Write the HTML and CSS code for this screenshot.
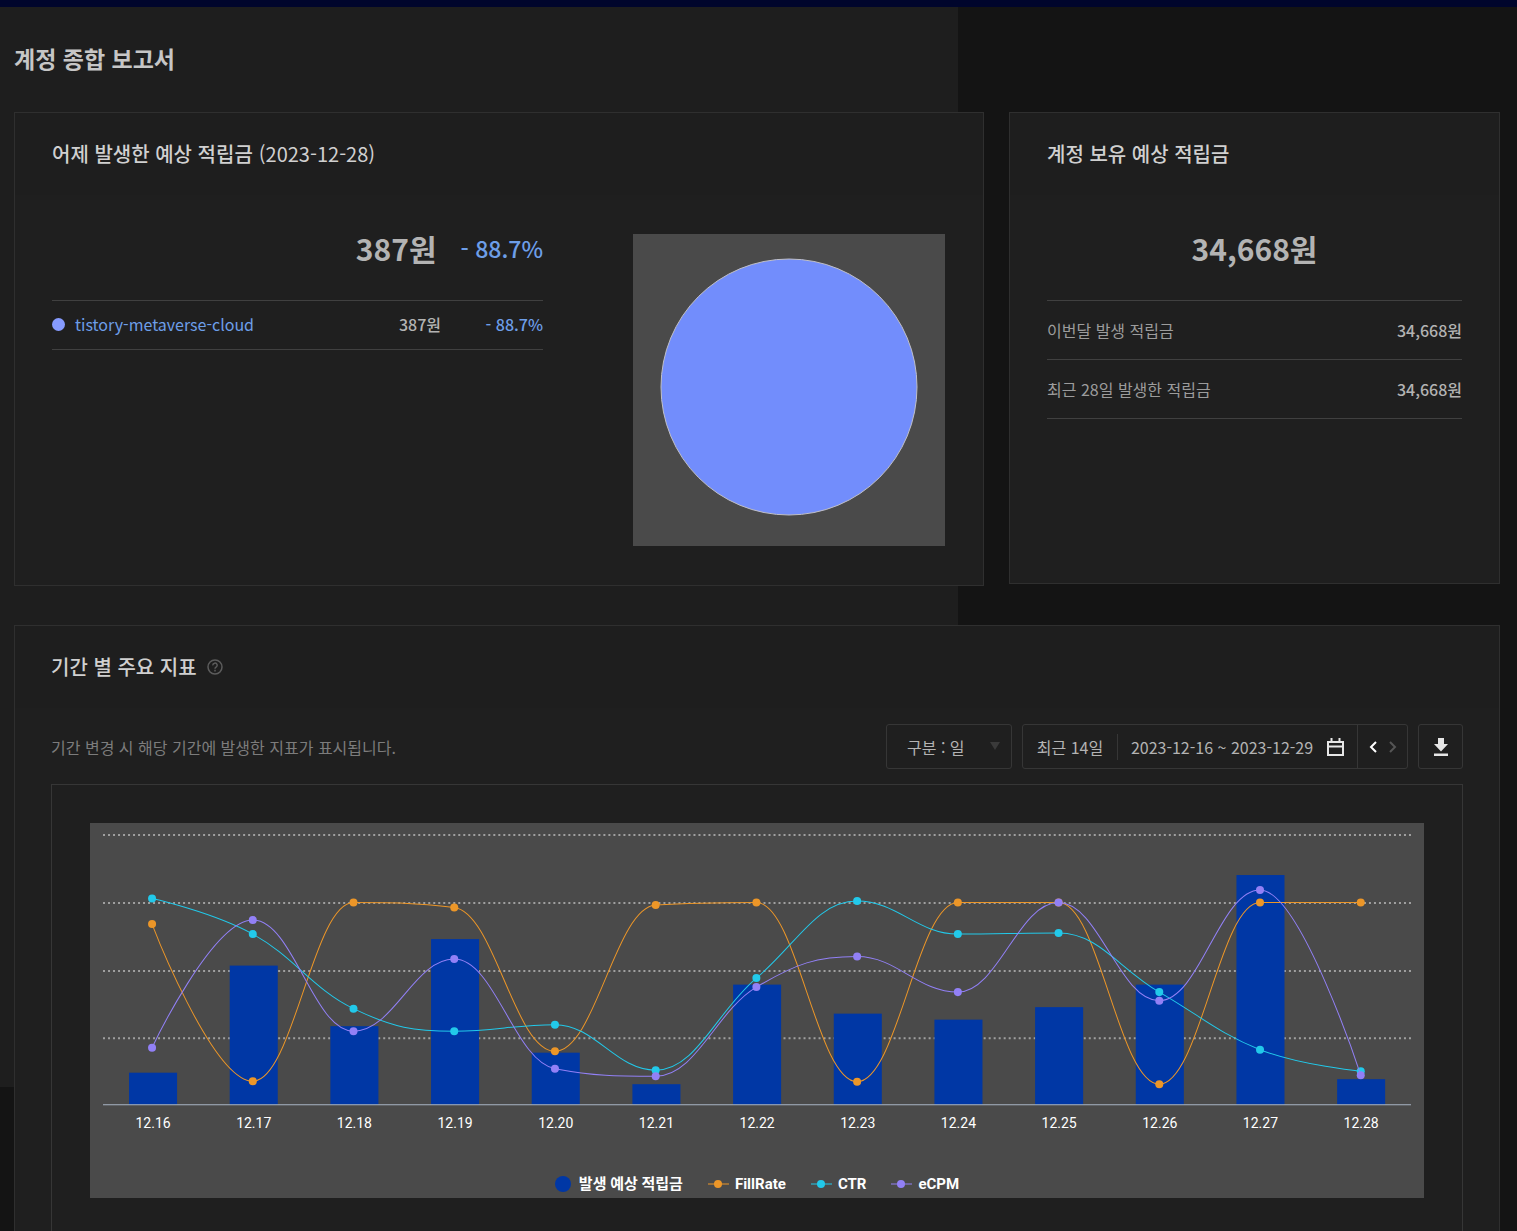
FILE: index.html
```
<!DOCTYPE html>
<html lang="ko">
<head>
    <meta charset="utf-8">
    <title>계정 종합 보고서</title>
    <link rel="stylesheet" href="styles.css">
</head>
<body>
    <div class="topbar"></div>
    <main class="page">
        <h1 class="page-title">계정 종합 보고서</h1>

        <div class="cards">
            <section class="card card-yesterday">
                <h2 class="card-head">어제 발생한 예상 적립금 <span class="date">(2023-12-28)</span></h2>
                <div class="card-body split">
                    <div class="income">
                        <div class="total">
                            <strong>387원</strong>
                            <span class="down">- 88.7%</span>
                        </div>
                        <ul class="media-list">
                            <li>
                                <i class="dot"></i>
                                <a href="#">tistory-metaverse-cloud</a>
                                <span class="amount">387원</span>
                                <span class="down rate">- 88.7%</span>
                            </li>
                        </ul>
                    </div>
                    <svg class="pie" viewBox="0 0 312 312">
                        <circle cx="156" cy="153" r="128" />
                    </svg>
                </div>
            </section>

            <section class="card">
                <h2 class="card-head">계정 보유 예상 적립금</h2>
                <div class="card-body">
                    <div class="total center"><strong>34,668원</strong></div>
                    <dl class="sum-list">
                        <div><dt>이번달 발생 적립금</dt><dd>34,668원</dd></div>
                        <div><dt>최근 28일 발생한 적립금</dt><dd>34,668원</dd></div>
                    </dl>
                </div>
            </section>
        </div>

        <section class="card card-chart">
            <h2 class="card-head">기간 별 주요 지표
                <button class="help" type="button" aria-label="도움말">
                    <svg width="16" height="16" viewBox="0 0 16 16">
                        <circle cx="8" cy="8" r="7" />
                        <path d="M5.8 6.4a2.2 2.2 0 1 1 3.3 1.8C8.3 8.700 8 9 8 9.800M8 10.800v1.600" />
                    </svg>
                </button>
            </h2>
            <div class="card-body">
                <div class="toolbar">
                    <p>기간 변경 시 해당 기간에 발생한 지표가 표시됩니다.</p>
                    <div class="select">
                        <select aria-label="구분">
                            <option>구분 : 일</option>
                        </select>
                        <svg width="10" height="8" viewBox="0 0 10 8"><path d="M0 0h10L5 8z" /></svg>
                    </div>
                    <div class="range">
                        <button class="preset" type="button">최근 14일</button>
                        <button class="dates" type="button">2023-12-16 ~ 2023-12-29
                            <svg width="17" height="18" viewBox="0 0 17 18"><path d="M1 4h15v13H1zM1 8.500h15M4.500 0v4M12.500 0v4" /></svg>
                        </button>
                        <div class="arrows">
                            <button type="button" aria-label="이전"><svg width="8" height="12" viewBox="0 0 8 12"><path d="M7 1L2 6l5 5" /></svg></button>
                            <button type="button" aria-label="다음" disabled><svg width="8" height="12" viewBox="0 0 8 12"><path d="M1 1l5 5-5 5" /></svg></button>
                        </div>
                    </div>
                    <button class="download" type="button" aria-label="다운로드">
                        <svg width="14" height="18" viewBox="0 0 14 18"><path d="M4 0h6v6h4l-7 7.500L0 6h4zM0 15.500h14v2.500H0z" /></svg>
                    </button>
                </div>

                <div class="chart-box">
                    <div class="chart">
                        <svg id="chart" viewBox="0 0 1333 340"></svg>
                        <ul class="legend">
                            <li class="income-bar"><svg width="16" height="16"><circle class="bar" cx="8" cy="8" r="8" /></svg>발생 예상 적립금</li>
                            <li><svg class="fill-rate" width="21" height="8"><path class="line" d="M0 4h21" /><circle class="point" cx="10" cy="4" r="4" /></svg>FillRate</li>
                            <li><svg class="ctr" width="21" height="8"><path class="line" d="M0 4h21" /><circle class="point" cx="10" cy="4" r="4" /></svg>CTR</li>
                            <li><svg class="ecpm" width="21" height="8"><path class="line" d="M0 4h21" /><circle class="point" cx="10" cy="4" r="4" /></svg>eCPM</li>
                        </ul>
                    </div>
                </div>
            </div>
        </section>
    </main>

    <script src="chart.js"></script>
</body>
</html>
```

FILE: styles.css
```
* { box-sizing: border-box; margin: 0; padding: 0; }
body {
    height: 100vh;
    overflow: hidden;
    background: #141414;
    color: #b3b3b3;
    font: 16px/24px "Noto Sans CJK KR", sans-serif;
}
button, select { font: inherit; color: inherit; background: none; border: 0; border-radius: 0; }
ul { list-style: none; }
svg { display: block; }
a { color: #6d9ee8; text-decoration: none; }
a:hover { text-decoration: underline; }

.topbar { height: 7px; background: #00052c; }
.page {
    padding: 34px 17px 0 14px;
    background: linear-gradient(#1e1e1e, #1e1e1e) no-repeat 0 0 / 958px 1080px;
}
.page-title { font-size: 23px; line-height: 34px; font-weight: 700; color: #c6c6c6; margin-bottom: 37px; }

.cards { display: grid; grid-template-columns: 970fr 491fr; gap: 25px; align-items: start; margin-bottom: 39px; }
.card { background: #1f1f1f; border: 1px solid #2f2f2f; min-height: 472px; }
.card-yesterday { min-height: 474px; }
.card-head {
    display: flex;
    align-items: center;
    gap: 6px;
    height: 82px;
    padding: 0 37px;
    background: #1e1e1e;
    color: #d0d0d0;
    font-size: 20px;
    line-height: 30px;
    font-weight: 500;
}
.card-head .date { font-weight: 400; }
.card-body { padding: 0 37px; }
.card-chart .card-head, .card-chart .card-body { padding: 0 36px; }
.split { display: flex; justify-content: space-between; gap: 90px; }
.income { flex: 1; }

.total { display: flex; align-items: center; justify-content: flex-end; gap: 24px; height: 105px; }
.total strong { font-size: 30px; line-height: 44px; font-weight: 700; }
.total .down { font-size: 23px; line-height: 36px; }
.total.center { justify-content: center; }
.down { color: #6d9ee8; font-weight: 500; }

.media-list { border-top: 1px solid #404040; }
.media-list li { display: flex; align-items: center; height: 49px; padding-bottom: 2px; border-bottom: 1px solid #404040; }
.dot { width: 13px; height: 13px; margin-right: 10px; border-radius: 50%; background: #869bff; }
.amount { margin-left: auto; font-weight: 500; }
.rate { width: 102px; text-align: right; }

.pie { flex: none; width: 312px; height: 312px; margin-top: 39px; margin-right: 1px; background: #4a4a4a; }
.pie circle { fill: #728dfc; stroke: #c0c0c8; }

.sum-list { border-top: 1px solid #404040; }
.sum-list div { display: flex; align-items: center; justify-content: space-between; height: 59px; border-bottom: 1px solid #404040; }
.sum-list dt { color: #9c9c9c; }
.sum-list dd { font-weight: 500; }

.help { margin-left: 4px; cursor: pointer; }
.help svg { fill: none; stroke: #5c5c5c; stroke-width: 1.5; }

.toolbar { display: flex; align-items: center; height: 45px; margin: 16px 0 15px; }
.toolbar p { margin-right: auto; color: #7c7c7c; }
.select, .range, .download { height: 45px; border: 1px solid #363636; border-radius: 3px; }
.select { position: relative; width: 126px; margin-right: 10px; }
.select select { width: 100%; height: 100%; padding-left: 20px; appearance: none; }
.select svg { position: absolute; right: 11px; top: 17px; fill: #3a3a3a; pointer-events: none; }
.range { display: flex; align-items: center; width: 386px; margin-right: 10px; }
.preset { width: 95px; height: 26px; border-right: 1px solid #363636; }
.dates { flex: 1; display: flex; align-items: center; justify-content: center; gap: 14px; }
.dates svg { fill: none; stroke: #e6e6e6; stroke-width: 2; }
.arrows { display: flex; align-items: center; justify-content: center; gap: 12px; width: 50px; height: 43px; border-left: 1px solid #363636; }
.arrows svg { fill: none; stroke: #fff; stroke-width: 2; }
.arrows button:disabled svg { stroke: #555; }
.download { display: flex; align-items: center; justify-content: center; width: 45px; }
.download svg { fill: #e6e6e6; }

.chart-box { border: 1px solid #363636; padding: 38px; }
.chart { background: #4a4a4a; }
.chart > svg { width: 100%; }
.chart text { fill: #fff; font: 14px Roboto, sans-serif; text-anchor: middle; }
.grid { stroke: #a0a0a0; stroke-width: 2; stroke-dasharray: 2 3; }
.axis { stroke: #a9b4c4; }
.bar { fill: #0037a5; }
.line { fill: none; stroke: currentColor; }
.point { fill: currentColor; }
.fill-rate { color: #ec9628; }
.ctr { color: #22c9ea; }
.ecpm { color: #9280f6; }

.legend {
    display: flex;
    justify-content: center;
    gap: 25px;
    padding-top: 9px;
    padding-bottom: 2px;
    color: #fff;
    font: 700 15px/24px Roboto, "Noto Sans CJK KR", sans-serif;
}
.legend li { display: flex; align-items: center; gap: 6px; }
.legend .income-bar { gap: 8px; }
```

FILE: chart.js
```
const BASE = 281.5;
const FIRST = 62;
const STEP = 100.65;

const labels = ['12.16', '12.17', '12.18', '12.19', '12.20', '12.21', '12.22', '12.23', '12.24', '12.25', '12.26', '12.27', '12.28'];
const income = [32, 139, 78.5, 165.5, 52, 20.5, 120, 91, 85, 97.5, 120, 229.5, 25.5];
const lines = [
    { name: 'fill-rate', data: [180.5, 23.5, 202, 197, 53.5, 199.5, 202, 23, 202, 202, 20.5, 202, 202] },
    { name: 'ctr', data: [206, 170.5, 96, 73.5, 80, 34.5, 126.5, 203.5, 170.5, 171.5, 112.5, 55, 33.5] },
    { name: 'ecpm', data: [57, 184.5, 73.5, 145.5, 36, 28.5, 117.5, 148, 112.5, 202, 104, 214.5, 29.5] }
];

// control points on both sides of a point, kept inside its neighbours
function controls(prev, p, next) {
    const lx = (1.5 * p.x + prev.x) / 2.5;
    const rx = (1.5 * p.x + next.x) / 2.5;
    let ly = (1.5 * p.y + prev.y) / 2.5;
    let ry = (1.5 * p.y + next.y) / 2.5;
    const fix = (ry - ly) * (rx - p.x) / (rx - lx) + p.y - ry;
    ly += fix;
    ry += fix;
    if (ly > prev.y && ly > p.y) {
        ly = Math.max(prev.y, p.y);
        ry = 2 * p.y - ly;
    } else if (ly < prev.y && ly < p.y) {
        ly = Math.min(prev.y, p.y);
        ry = 2 * p.y - ly;
    }
    if (ry > next.y && ry > p.y) {
        ry = Math.max(next.y, p.y);
        ly = 2 * p.y - ry;
    } else if (ry < next.y && ry < p.y) {
        ry = Math.min(next.y, p.y);
        ly = 2 * p.y - ry;
    }
    return [lx, ly, rx, ry];
}

function spline(pts) {
    let d = `M${pts[0].x} ${pts[0].y}`;
    let out = [pts[0].x, pts[0].y];
    for (let i = 1; i < pts.length; i++) {
        const p = pts[i];
        const c = i < pts.length - 1 ? controls(pts[i - 1], p, pts[i + 1]) : [p.x, p.y, p.x, p.y];
        d += `C${out[0]} ${out[1]} ${c[0]} ${c[1]} ${p.x} ${p.y}`;
        out = [c[2], c[3]];
    }
    return d;
}

let html = '';
[12, 80, 148, 215].forEach(y => {
    html += `<line class="grid" x1="13" x2="1320" y1="${y}" y2="${y}" />`;
});
income.forEach((v, i) => {
    html += `<rect class="bar" x="${39 + i * 100.6}" y="${BASE - v}" width="48" height="${v}" />`;
    html += `<text x="${63 + i * 100.6}" y="305">${labels[i]}</text>`;
});
html += `<line class="axis" x1="13" x2="1320" y1="${BASE}" y2="${BASE}" />`;
lines.forEach(line => {
    const pts = line.data.map((v, i) => ({ x: FIRST + i * STEP, y: BASE - v }));
    html += `<g class="${line.name}"><path class="line" d="${spline(pts)}" />`;
    pts.forEach(p => {
        html += `<circle class="point" cx="${p.x}" cy="${p.y}" r="4" />`;
    });
    html += '</g>';
});
document.getElementById('chart').innerHTML = html;
```
